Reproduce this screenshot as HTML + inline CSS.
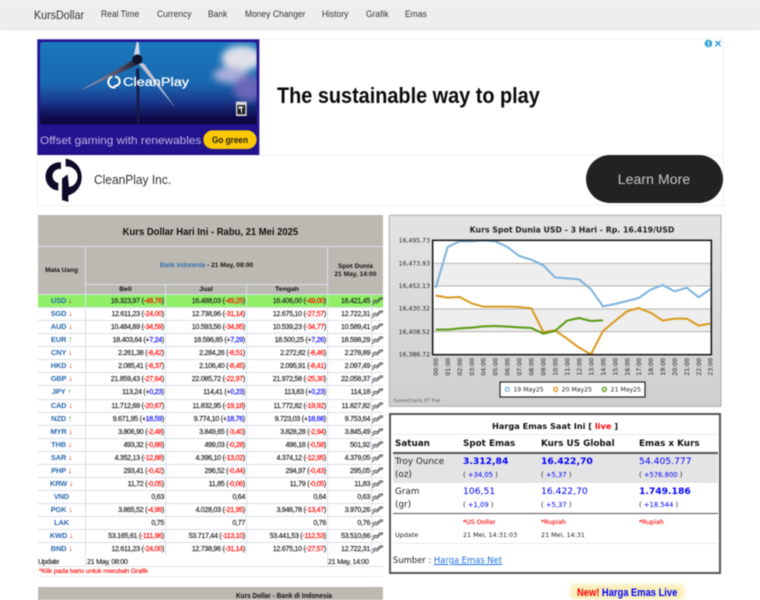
<!DOCTYPE html>
<html><head><meta charset="utf-8"><title>KursDollar</title>
<style>
html,body{margin:0;padding:0;background:#fff;width:760px;height:600px;overflow:hidden}
body{font-family:"Liberation Sans",sans-serif;color:#111;position:relative}
.a{position:absolute;white-space:nowrap}
#wrap{position:absolute;left:0;top:0;width:760px;height:600px;overflow:hidden;filter:blur(.4px)}
#nav{position:absolute;left:0;top:0;width:760px;height:29px;background:#eee;border-bottom:1px solid #e2e2e2}
#nav span{position:absolute;top:9px;font-size:9.6px;line-height:11px;color:#333;white-space:nowrap;transform:scaleX(.885);transform-origin:0 50%}
#tb{position:absolute;left:38px;top:215px;width:345px;background:#d8e0ea;font-size:7.2px;line-height:12px}
.h{position:absolute;background:#bcb9b2;font-weight:bold;text-align:center;color:#111}
.r{position:absolute;left:0;width:345px;height:12.07px}
.r div{position:absolute;top:0;height:12.07px;background:#fff;text-align:right;white-space:nowrap;line-height:12.6px;color:#222;-webkit-text-stroke:.15px #222;letter-spacing:-.33px}
.r.g div{background:#90ef66}
.r .c{left:0;width:47px;text-align:center;color:#2a68b0;font-weight:bold;font-size:7.4px;letter-spacing:-.1px;-webkit-text-stroke:0}
.r .b{left:48px;width:79px}
.r .j{left:128px;width:80px}
.r .t{left:209px;width:80px}
.r .s{left:290px;width:43px}
.r .i{left:334px;width:11px}
.r .b,.r .j,.r .t,.r .s{box-sizing:border-box;padding-right:1px}
i{font-style:normal}
.m{color:#f00;-webkit-text-stroke:.15px #f00}
.p{color:#00f;-webkit-text-stroke:.15px #00f}
.d{color:#e02020;font-size:8px}.u{color:#2a9a3a;font-size:8px}
.i svg{position:absolute;left:0;top:1px;width:11px;height:10px}
#g span{position:absolute;white-space:nowrap;font-family:"DejaVu Sans",sans-serif}
.sm{letter-spacing:-.33px;-webkit-text-stroke:.12px #222}
</style></head><body><div id="wrap">

<div id="nav">
<span style="left:34px;top:8px;font-size:12.4px;line-height:14px;transform:scaleX(.865)">KursDollar</span>
<span style="left:101px">Real Time</span>
<span style="left:157px">Currency</span>
<span style="left:208px">Bank</span>
<span style="left:245px">Money Changer</span>
<span style="left:322px">History</span>
<span style="left:366px">Grafik</span>
<span style="left:405px">Emas</span>
</div>

<!-- ad -->
<div class="a" style="left:37px;top:38px;width:685px;height:166px;border:1px solid #eee"></div>
<div class="a" style="left:38px;top:155px;width:685px;height:1px;background:#eee"></div>
<svg class="a" style="left:0;top:0" width="380" height="210" viewBox="0 0 1140 630">
<defs>
<linearGradient id="sky" x1="0" y1="0" x2="0" y2="1"><stop offset="0" stop-color="#1b78bd"/><stop offset=".5" stop-color="#1a68b0"/><stop offset=".72" stop-color="#1a3a8c"/><stop offset=".9" stop-color="#100c52"/><stop offset="1" stop-color="#0a0838"/></linearGradient>
<filter id="bl"><feGaussianBlur stdDeviation="10"/></filter>
<linearGradient id="bd" x1="0" y1="0" x2="1" y2="0"><stop offset="0" stop-color="#b8a8c8"/><stop offset="1" stop-color="#1c1c30"/></linearGradient>
<clipPath id="cp"><rect x="120" y="126" width="650" height="247" rx="8"/></clipPath>
</defs>
<rect x="112" y="118" width="666" height="347" fill="#23138f"/>
<g clip-path="url(#cp)">
<rect x="120" y="126" width="650" height="247" fill="url(#sky)"/>
<g filter="url(#bl)"><ellipse cx="725" cy="175" rx="60" ry="38" fill="#dfe0e8"/><ellipse cx="690" cy="225" rx="50" ry="24" fill="#a8aeda"/><ellipse cx="745" cy="265" rx="45" ry="38" fill="#6a66b8"/></g>
<path d="M408 205 L418 205 L418 372 L412 372Z" fill="#1a1c48"/>
<path d="M402 178 L240 272 L390 205 L418 190Z" fill="url(#bd)"/>
<path d="M415 190 L525 322 L432 190Z" fill="#c4c4d4"/>
<path d="M400 175 L410 125 L416 125 L420 175Z" fill="#d8d8e4"/>
<circle cx="412" cy="178" r="15" fill="#12142c"/>
</g>
<path d="M337 230 A16 16 0 1 0 346 262" fill="none" stroke="#fff" stroke-width="6"/><path d="M345 230 A14 14 0 0 1 345 258 L341 264" fill="none" stroke="#fff" stroke-width="6"/>
<text x="369" y="258" font-size="37" fill="#fff" stroke="#fff" stroke-width=".8" textLength="198" lengthAdjust="spacingAndGlyphs">CleanPlay</text>
<rect x="708" y="305" width="32" height="43" fill="#ddd"/><rect x="712" y="315" width="24" height="28" fill="#222"/><path d="M716 320h16l-6 4v14h-3v-12h-7z" fill="#fff"/>
<text x="120" y="432" font-size="33" fill="#bdb4e6" textLength="484" lengthAdjust="spacingAndGlyphs">Offset gaming with renewables</text>
<rect x="610" y="391" width="160" height="56" rx="28" fill="#fac800"/>
<text x="636" y="429" font-size="27" font-weight="bold" fill="#222" textLength="108" lengthAdjust="spacingAndGlyphs">Go green</text>
<!-- logo -->
<path d="M183 487 A42 42 0 0 0 175 572 L175 549 A21 21 0 0 1 183 507Z" fill="#0e0a28"/>
<path d="M197 476 A55 55 0 0 1 245 533 A55 55 0 0 1 205 586 L205 606 L186 600 L186 536 L203 523 L207 561 A30 30 0 0 0 197 500Z" fill="#0e0a28"/>
</svg>
<div class="a" style="left:94px;top:172px;font-size:12.6px;line-height:16px;color:#333;transform:scaleX(.95);transform-origin:0 50%">CleanPlay Inc.</div>
<div class="a" style="left:277px;top:82px;font-size:22px;line-height:27px;font-weight:bold;color:#0a0a0a;transform:scaleX(.903);transform-origin:0 50%">The sustainable way to play</div>
<div class="a" style="left:586px;top:155px;width:137px;height:48px;border-radius:24px;background:#222"></div>
<div class="a" style="left:586px;top:171px;width:136px;text-align:center;font-size:14px;line-height:17px;color:#c8c8c8;letter-spacing:.1px">Learn More</div>
<svg class="a" style="left:703px;top:39px" width="20" height="10" viewBox="0 0 20 10"><circle cx="5.5" cy="4.5" r="3.8" fill="#2a9fd0"/><rect x="5" y="2" width="1.2" height="5" fill="#fff"/><path d="M12.5 2l5 5M17.5 2l-5 5" stroke="#2a9fd0" stroke-width="1.5"/></svg>

<!-- main table -->
<div id="tb" style="height:340px">
<div class="h" style="left:0;top:0;width:345px;height:31px;line-height:36px;font-size:10.4px"><span style="display:inline-block;transform:scaleX(.91)">Kurs Dollar Hari Ini - Rabu, 21 Mei 2025</span></div>
<div class="h" style="left:0;top:32px;width:47px;height:47px;line-height:48px;font-size:6.5px">Mata Uang</div>
<div class="h" style="left:48px;top:32px;width:241px;height:37px;line-height:37px;font-size:6.6px"><span style="color:#2a68b0;font-weight:normal;-webkit-text-stroke:.15px #2a68b0">Bank Indonesia</span> - 21 May, 08:00</div>
<div class="h" style="left:290px;top:32px;width:55px;height:47px;font-size:6.6px;line-height:7.6px"><div style="padding-top:16px">Spot Dunia<br>21 May, 14:00</div></div>
<div class="h" style="left:48px;top:70px;width:79px;height:9px;line-height:9.5px;font-size:6.8px">Beli</div>
<div class="h" style="left:128px;top:70px;width:80px;height:9px;line-height:9.5px;font-size:6.8px">Jual</div>
<div class="h" style="left:209px;top:70px;width:80px;height:9px;line-height:9.5px;font-size:6.8px">Tengah</div>
<svg width="0" height="0" style="position:absolute"><symbol id="ic" viewBox="0 0 11 10"><path d="M0 6l3-2 2 1 3-3 3 0M0 9l3-3 2 1 3-3 3-1" fill="none" stroke="#444" stroke-width=".9"/></symbol></svg>

<div class="r g" style="top:80px"><div class="c">USD <i class="d">↓</i></div><div class="b">16.323,97 (<i class="m">-48,76</i>)</div><div class="j">16.488,03 (<i class="m">-49,25</i>)</div><div class="t">16.406,00 (<i class="m">-49,00</i>)</div><div class="s">16.421,45</div><div class="i"><svg><use href="#ic"/></svg></div></div>
<div class="r" style="top:93.07px"><div class="c">SGD <i class="d">↓</i></div><div class="b">12.611,23 (<i class="m">-24,00</i>)</div><div class="j">12.738,96 (<i class="m">-31,14</i>)</div><div class="t">12.675,10 (<i class="m">-27,57</i>)</div><div class="s">12.722,31</div><div class="i"><svg><use href="#ic"/></svg></div></div>
<div class="r" style="top:106.14px"><div class="c">AUD <i class="d">↓</i></div><div class="b">10.484,89 (<i class="m">-34,59</i>)</div><div class="j">10.593,56 (<i class="m">-34,95</i>)</div><div class="t">10.539,23 (<i class="m">-34,77</i>)</div><div class="s">10.589,41</div><div class="i"><svg><use href="#ic"/></svg></div></div>
<div class="r" style="top:119.21px"><div class="c">EUR <i class="u">↑</i></div><div class="b">18.403,64 (+<i class="p">7,24</i>)</div><div class="j">18.596,85 (+<i class="p">7,29</i>)</div><div class="t">18.500,25 (+<i class="p">7,26</i>)</div><div class="s">18.598,29</div><div class="i"><svg><use href="#ic"/></svg></div></div>
<div class="r" style="top:132.28px"><div class="c">CNY <i class="d">↓</i></div><div class="b">2.261,38 (<i class="m">-8,42</i>)</div><div class="j">2.284,26 (<i class="m">-8,51</i>)</div><div class="t">2.272,82 (<i class="m">-8,46</i>)</div><div class="s">2.278,89</div><div class="i"><svg><use href="#ic"/></svg></div></div>
<div class="r" style="top:145.35px"><div class="c">HKD <i class="d">↓</i></div><div class="b">2.085,41 (<i class="m">-8,37</i>)</div><div class="j">2.106,40 (<i class="m">-8,45</i>)</div><div class="t">2.095,91 (<i class="m">-8,41</i>)</div><div class="s">2.097,49</div><div class="i"><svg><use href="#ic"/></svg></div></div>
<div class="r" style="top:158.42px"><div class="c">GBP <i class="d">↓</i></div><div class="b">21.859,43 (<i class="m">-27,64</i>)</div><div class="j">22.085,72 (<i class="m">-22,97</i>)</div><div class="t">21.972,58 (<i class="m">-25,30</i>)</div><div class="s">22.058,37</div><div class="i"><svg><use href="#ic"/></svg></div></div>
<div class="r" style="top:171.49px"><div class="c">JPY <i class="u">↑</i></div><div class="b">113,24 (+<i class="p">0,23</i>)</div><div class="j">114,41 (+<i class="p">0,23</i>)</div><div class="t">113,83 (+<i class="p">0,23</i>)</div><div class="s">114,18</div><div class="i"><svg><use href="#ic"/></svg></div></div>
<div class="r" style="top:184.56px"><div class="c">CAD <i class="d">↓</i></div><div class="b">11.712,69 (<i class="m">-20,67</i>)</div><div class="j">11.832,95 (<i class="m">-19,18</i>)</div><div class="t">11.772,82 (<i class="m">-19,92</i>)</div><div class="s">11.827,82</div><div class="i"><svg><use href="#ic"/></svg></div></div>
<div class="r" style="top:197.63px"><div class="c">NZD <i class="u">↑</i></div><div class="b">9.671,95 (+<i class="p">18,59</i>)</div><div class="j">9.774,10 (+<i class="p">18,76</i>)</div><div class="t">9.723,03 (+<i class="p">18,68</i>)</div><div class="s">9.753,64</div><div class="i"><svg><use href="#ic"/></svg></div></div>
<div class="r" style="top:210.7px"><div class="c">MYR <i class="d">↓</i></div><div class="b">3.806,90 (<i class="m">-2,48</i>)</div><div class="j">3.849,65 (<i class="m">-3,40</i>)</div><div class="t">3.828,28 (<i class="m">-2,94</i>)</div><div class="s">3.845,49</div><div class="i"><svg><use href="#ic"/></svg></div></div>
<div class="r" style="top:223.77px"><div class="c">THB <i class="d">↓</i></div><div class="b">493,32 (<i class="m">-0,88</i>)</div><div class="j">499,03 (<i class="m">-0,28</i>)</div><div class="t">496,18 (<i class="m">-0,58</i>)</div><div class="s">501,92</div><div class="i"><svg><use href="#ic"/></svg></div></div>
<div class="r" style="top:236.84px"><div class="c">SAR <i class="d">↓</i></div><div class="b">4.352,13 (<i class="m">-12,88</i>)</div><div class="j">4.396,10 (<i class="m">-13,02</i>)</div><div class="t">4.374,12 (<i class="m">-12,95</i>)</div><div class="s">4.379,05</div><div class="i"><svg><use href="#ic"/></svg></div></div>
<div class="r" style="top:249.91px"><div class="c">PHP <i class="d">↓</i></div><div class="b">293,41 (<i class="m">-0,42</i>)</div><div class="j">296,52 (<i class="m">-0,44</i>)</div><div class="t">294,97 (<i class="m">-0,43</i>)</div><div class="s">295,05</div><div class="i"><svg><use href="#ic"/></svg></div></div>
<div class="r" style="top:262.98px"><div class="c">KRW <i class="d">↓</i></div><div class="b">11,72 (<i class="m">-0,05</i>)</div><div class="j">11,85 (<i class="m">-0,06</i>)</div><div class="t">11,79 (<i class="m">-0,05</i>)</div><div class="s">11,83</div><div class="i"><svg><use href="#ic"/></svg></div></div>
<div class="r" style="top:276.05px"><div class="c">VND</div><div class="b">0,63</div><div class="j">0,64</div><div class="t">0,64</div><div class="s">0,63</div><div class="i"><svg><use href="#ic"/></svg></div></div>
<div class="r" style="top:289.12px"><div class="c">PGK <i class="d">↓</i></div><div class="b">3.865,52 (<i class="m">-4,99</i>)</div><div class="j">4.028,03 (<i class="m">-21,95</i>)</div><div class="t">3.946,78 (<i class="m">-13,47</i>)</div><div class="s">3.970,26</div><div class="i"><svg><use href="#ic"/></svg></div></div>
<div class="r" style="top:302.19px"><div class="c">LAK</div><div class="b">0,75</div><div class="j">0,77</div><div class="t">0,76</div><div class="s">0,76</div><div class="i"><svg><use href="#ic"/></svg></div></div>
<div class="r" style="top:315.26px"><div class="c">KWD <i class="d">↓</i></div><div class="b">53.165,61 (<i class="m">-111,96</i>)</div><div class="j">53.717,44 (<i class="m">-113,10</i>)</div><div class="t">53.441,53 (<i class="m">-112,53</i>)</div><div class="s">53.510,66</div><div class="i"><svg><use href="#ic"/></svg></div></div>
<div class="r" style="top:328.33px"><div class="c">BND <i class="d">↓</i></div><div class="b">12.611,23 (<i class="m">-24,00</i>)</div><div class="j">12.738,96 (<i class="m">-31,14</i>)</div><div class="t">12.675,10 (<i class="m">-27,57</i>)</div><div class="s">12.722,31</div><div class="i"><svg><use href="#ic"/></svg></div></div>
</div>
<div class="a" style="left:38px;top:556px;width:47px;height:10px;background:#fff;font-size:7.2px;line-height:11px;color:#222;"><span class="sm">Update</span></div>
<div class="a" style="left:85px;top:556px;width:1px;height:10px;background:#d8e0ea"></div>
<div class="a sm" style="left:87px;top:556px;font-size:7.2px;line-height:11px;color:#222">21 May, 08:00</div>
<div class="a" style="left:327px;top:556px;width:1px;height:10px;background:#d8e0ea"></div>
<div class="a sm" style="left:328px;top:556px;font-size:7.2px;line-height:11px;color:#222">21 May, 14:00</div>
<div class="a" style="left:38px;top:566px;width:345px;height:1px;background:#d8e0ea"></div>
<div class="a" style="left:38px;top:576px;width:345px;height:1px;background:#e8ecf1"></div>
<div class="a" style="left:39px;top:566px;font-size:6.8px;line-height:11px;color:#f00;letter-spacing:-.15px;-webkit-text-stroke:.12px #f00">*Klik pada baris untuk merubah Grafik</div>
<div class="a" style="left:38px;top:587px;width:345px;height:13px;background:#bcb9b2"></div>
<div class="a" style="left:236px;top:591px;font-size:7.2px;line-height:10px;font-weight:bold;color:#111;transform:scaleX(.9);transform-origin:0 50%">Kurs Dollar - Bank di Indonesia</div>

<!-- chart -->
<svg class="a" style="left:386px;top:212px" width="340" height="195" viewBox="0 0 1020 585" font-family="DejaVu Sans,sans-serif">
<defs><linearGradient id="cg" x1="0" y1="0" x2="0" y2="1"><stop offset="0" stop-color="#e4e4e4"/><stop offset="1" stop-color="#cfcfcf"/></linearGradient></defs>
<rect x="10" y="10" width="995" height="573" fill="url(#cg)" stroke="#aaa" stroke-width="3"/>
<text x="558" y="62" font-size="23.4" font-weight="bold" text-anchor="middle" fill="#222">Kurs Spot Dunia USD - 3 Hari - Rp. 16.419/USD</text>
<rect x="140" y="85" width="836" height="343" fill="#fff"/>
<rect x="140" y="154" width="836" height="68" fill="#eee"/>
<rect x="140" y="291" width="836" height="68" fill="#eee"/>
<path d="M140 154H976M140 222H976M140 291H976M140 359H976" stroke="#b8b4ac" stroke-width="3"/>
<g font-size="18.5" fill="#222" text-anchor="end"><text x="132" y="92">16,495.73</text><text x="132" y="160">16,473.93</text><text x="132" y="228">16,452.13</text><text x="132" y="296">16,430.32</text><text x="132" y="366">16,408.52</text><text x="132" y="433">16,386.72</text></g>
<g fill="none" stroke-width="6" stroke-linejoin="round">
<polyline stroke="#7fb2dc" points="149,228 185,105 221,88 257,88 292,85 328,88 364,105 400,132 436,143 472,160 507,196 543,199 579,202 615,232 651,283 687,276 723,267 758,258 794,233 830,219 866,238 902,227 938,256 973,231"/>
<polyline stroke="#d99a1e" points="149,251 185,257 221,255 257,274 292,284 328,284 364,284 400,285 436,289 472,360 507,355 543,380 579,407 615,427 651,357 687,327 723,298 758,288 794,302 830,326 866,320 902,320 938,341 973,335"/>
<polyline stroke="#5a9a12" points="149,353 185,353 221,349 257,347 292,343 328,342 364,344 400,346 436,348 472,365 507,357 543,326 579,318 615,327 651,325"/>
</g>
<rect x="140" y="85" width="836" height="343" fill="none" stroke="#111" stroke-width="4.5"/>
<g font-size="18.5" fill="#222">
<text transform="translate(156,491) rotate(-90)">00:00</text><text transform="translate(192,491) rotate(-90)">01:00</text><text transform="translate(228,491) rotate(-90)">02:00</text><text transform="translate(264,491) rotate(-90)">03:00</text><text transform="translate(299,491) rotate(-90)">04:00</text><text transform="translate(335,491) rotate(-90)">05:00</text><text transform="translate(371,491) rotate(-90)">06:00</text><text transform="translate(407,491) rotate(-90)">07:00</text><text transform="translate(443,491) rotate(-90)">08:00</text><text transform="translate(479,491) rotate(-90)">09:00</text><text transform="translate(514,491) rotate(-90)">10:00</text><text transform="translate(550,491) rotate(-90)">11:00</text><text transform="translate(586,491) rotate(-90)">12:00</text><text transform="translate(622,491) rotate(-90)">13:00</text><text transform="translate(658,491) rotate(-90)">14:00</text><text transform="translate(694,491) rotate(-90)">15:00</text><text transform="translate(730,491) rotate(-90)">16:00</text><text transform="translate(765,491) rotate(-90)">17:00</text><text transform="translate(801,491) rotate(-90)">18:00</text><text transform="translate(837,491) rotate(-90)">19:00</text><text transform="translate(873,491) rotate(-90)">20:00</text><text transform="translate(909,491) rotate(-90)">21:00</text><text transform="translate(945,491) rotate(-90)">22:00</text><text transform="translate(980,491) rotate(-90)">23:00</text>
</g>
<rect x="342" y="510" width="435" height="45" fill="#fff" stroke="#222" stroke-width="3.5"/>
<g fill="#fff" stroke-width="4"><circle cx="364" cy="532" r="6" stroke="#7fb2dc"/><circle cx="509" cy="532" r="6" stroke="#d99a1e"/><circle cx="655" cy="532" r="6" stroke="#5a9a12"/></g>
<g font-size="18.5" fill="#222"><text x="382" y="538">19 May25</text><text x="527" y="538">20 May25</text><text x="674" y="538">21 May25</text></g>
<text x="22" y="570" font-size="13.5" fill="#555">FusionCharts XT Trial</text>
</svg>

<!-- gold -->
<div class="a" style="left:389px;top:413px;width:328px;height:157px;border:2px solid #555"></div>
<div id="g">
<span style="left:492px;top:420px;font-size:8.2px;line-height:12px;font-weight:bold;color:#111">Harga Emas Saat Ini [ <i style="color:#f00">live</i> ]</span>
<div class="a" style="left:393px;top:434px;width:325px;height:1px;background:#e4e9f0"></div>
<span style="left:395px;top:438px;font-size:8.8px;line-height:12px;font-weight:bold">Satuan</span>
<span style="left:463px;top:438px;font-size:8.8px;line-height:12px;font-weight:bold">Spot Emas</span>
<span style="left:541px;top:438px;font-size:8.8px;line-height:12px;font-weight:bold">Kurs US Global</span>
<span style="left:639px;top:438px;font-size:8.8px;line-height:12px;font-weight:bold">Emas x Kurs</span>
<div class="a" style="left:393px;top:452px;width:325px;height:2px;background:#555"></div>
<div class="a" style="left:393px;top:454px;width:325px;height:29px;background:#e4e4e4"></div>
<span style="left:395px;top:456px;font-size:8.8px;line-height:12px;color:#222">Troy Ounce</span>
<span style="left:395px;top:468.5px;font-size:8.8px;line-height:12px;color:#222">(oz)</span>
<span style="left:463px;top:456px;font-size:9.2px;line-height:12px;font-weight:bold;color:#00f">3.312,84</span>
<span style="left:541px;top:456px;font-size:9.2px;line-height:12px;font-weight:bold;color:#00f">16.422,70</span>
<span style="left:639px;top:456px;font-size:9.2px;line-height:12px;color:#00f">54.405.777</span>
<span style="left:463px;top:470px;font-size:6.8px;line-height:10px;color:#00f"><i style="color:#222">(</i> +34,05 <i style="color:#222">)</i></span>
<span style="left:541px;top:470px;font-size:6.8px;line-height:10px;color:#00f"><i style="color:#222">(</i> +5,37 <i style="color:#222">)</i></span>
<span style="left:639px;top:470px;font-size:6.8px;line-height:10px;color:#00f"><i style="color:#222">(</i> +576.800 <i style="color:#222">)</i></span>
<span style="left:395px;top:486px;font-size:8.8px;line-height:12px;color:#222">Gram</span>
<span style="left:395px;top:498.5px;font-size:8.8px;line-height:12px;color:#222">(gr)</span>
<span style="left:463px;top:486px;font-size:9.2px;line-height:12px;color:#00f">106,51</span>
<span style="left:541px;top:486px;font-size:9.2px;line-height:12px;color:#00f">16.422,70</span>
<span style="left:639px;top:486px;font-size:9.2px;line-height:12px;font-weight:bold;color:#00f">1.749.186</span>
<span style="left:463px;top:500px;font-size:6.8px;line-height:10px;color:#00f"><i style="color:#222">(</i> +1,09 <i style="color:#222">)</i></span>
<span style="left:541px;top:500px;font-size:6.8px;line-height:10px;color:#00f"><i style="color:#222">(</i> +5,37 <i style="color:#222">)</i></span>
<span style="left:639px;top:500px;font-size:6.8px;line-height:10px;color:#00f"><i style="color:#222">(</i> +18.544 <i style="color:#222">)</i></span>
<div class="a" style="left:393px;top:513px;width:325px;height:1px;background:#555"></div>
<span style="left:463px;top:518px;font-size:6.3px;line-height:9px;color:#f00;-webkit-text-stroke:.1px #f00">*US Dollar</span>
<span style="left:541px;top:518px;font-size:6.3px;line-height:9px;color:#f00;-webkit-text-stroke:.1px #f00">*Rupiah</span>
<span style="left:639px;top:518px;font-size:6.3px;line-height:9px;color:#f00;-webkit-text-stroke:.1px #f00">*Rupiah</span>
<span style="left:395px;top:531px;font-size:6.4px;line-height:9px;color:#222">Update</span>
<span style="left:463px;top:531px;font-size:6.4px;line-height:9px;color:#222">21 Mei, 14:31:03</span>
<span style="left:541px;top:531px;font-size:6.4px;line-height:9px;color:#222">21 Mei, 14:31</span>
<div class="a" style="left:393px;top:543px;width:325px;height:1px;background:#e4e9f0"></div>
<span style="left:393px;top:554px;font-size:8.4px;line-height:12px;color:#222">Sumber : <a style="color:#1a6fe0;text-decoration:underline">Harga Emas Net</a></span>
</div>
<div class="a" style="left:570px;top:584px;width:115px;height:16px;background:#f7eeb8;border-radius:6px;filter:blur(2px)"></div>
<div class="a" style="left:577px;top:586px;font-size:11px;line-height:14px;font-weight:bold;color:#00f;transform:scaleX(.85);transform-origin:0 50%"><i style="color:#f00">New!</i> Harga Emas Live</div>
</div></body></html>
